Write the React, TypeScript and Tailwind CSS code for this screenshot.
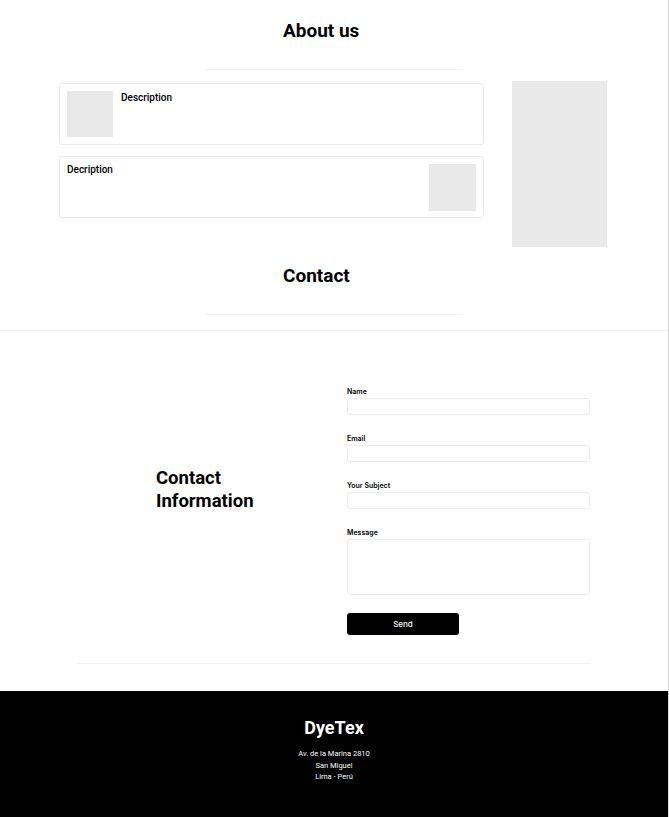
const font = { fontFamily: 'Roboto, "Noto Sans", sans-serif' };

function Placeholder({ className }: { className: string }) {
  return <div className={`bg-[#e9e9e9] ${className}`} />;
}

function Field({ label, tall }: { label: string; tall?: boolean }) {
  return (
    <div className="flex flex-col">
      <label className="text-[7px] leading-[9px] font-semibold text-black" style={{ fontFamily: 'Inter, sans-serif' }}>
        {label}
      </label>
      <div
        className={`mt-[2px] w-full rounded-[3px] border border-[#ececec] bg-white ${tall ? 'h-[56px]' : 'h-[17px]'}`}
      />
    </div>
  );
}

export default function App() {
  return (
    <div className="min-h-[817px] w-full border-r border-[#d6d6d6] bg-white" style={font}>
      {/* About us */}
      <section className="pt-[19px]">
        <h2 className="pl-[283px] text-[19px] leading-[24px] font-bold text-black">About us</h2>
        <div className="mx-auto mt-[26px] h-px w-[258px] bg-[#f1f1f1]" />

        <div className="mt-[11px] flex pl-[59px]">
          <div className="flex w-[425px] flex-col gap-[11px] pt-[2px]">
            <div className="flex h-[62px] gap-[8px] rounded-[3px] border border-[#ebebeb] p-[7px]">
              <Placeholder className="h-[46px] w-[46px] shrink-0" />
              <p className="pt-[1px] text-[10px] leading-[12px] font-medium text-black">Description</p>
            </div>
            <div className="flex h-[62px] justify-between rounded-[3px] border border-[#ebebeb] p-[7px]">
              <p className="text-[10px] leading-[12px] font-medium text-black">Decription</p>
              <Placeholder className="h-[47px] w-[47px] shrink-0" />
            </div>
          </div>
          <Placeholder className="ml-[28px] h-[166px] w-[95px]" />
        </div>
      </section>

      {/* Contact heading */}
      <section className="pt-[17px]">
        <h2 className="pl-[283px] text-[19px] leading-[24px] font-bold text-black">Contact</h2>
        <div className="mx-auto mt-[26px] h-px w-[258px] bg-[#f1f1f1]" />
      </section>

      {/* Contact form */}
      <section className="mt-[15px] border-t border-[#f0f0f0] pt-[56px]">
        <div className="flex">
          <div className="flex w-[347px] items-center pl-[156px]">
            <h3 className="-mt-[42px] text-[18.5px] leading-[23px] font-bold text-black">
              Contact
              <br />
              Information
            </h3>
          </div>
          <form className="flex w-[243px] flex-col gap-[19px]">
            <Field label="Name" />
            <Field label="Email" />
            <Field label="Your Subject" />
            <Field label="Message" tall />
            <button
              type="button"
              className="-mt-[1px] h-[22px] w-[112px] rounded-[3px] bg-black text-[8px] font-medium text-white"
              style={{ fontFamily: 'Inter, sans-serif' }}
            >
              Send
            </button>
          </form>
        </div>
        <div className="mt-[28px] ml-[77px] h-px w-[514px] bg-[#f1f1f1]" />
      </section>

      {/* Footer */}
      <footer className="mt-[27px] flex h-[126px] flex-col items-center bg-black pt-[26px] text-white">
        <h4 className="text-[18px] leading-[22px] font-bold">DyeTex</h4>
        <div className="mt-[9px] text-center text-[7.5px] leading-[11.5px]">
          <p>Av. de la Marina 2810</p>
          <p>San Miguel</p>
          <p>Lima - Perú</p>
        </div>
      </footer>
    </div>
  );
}
